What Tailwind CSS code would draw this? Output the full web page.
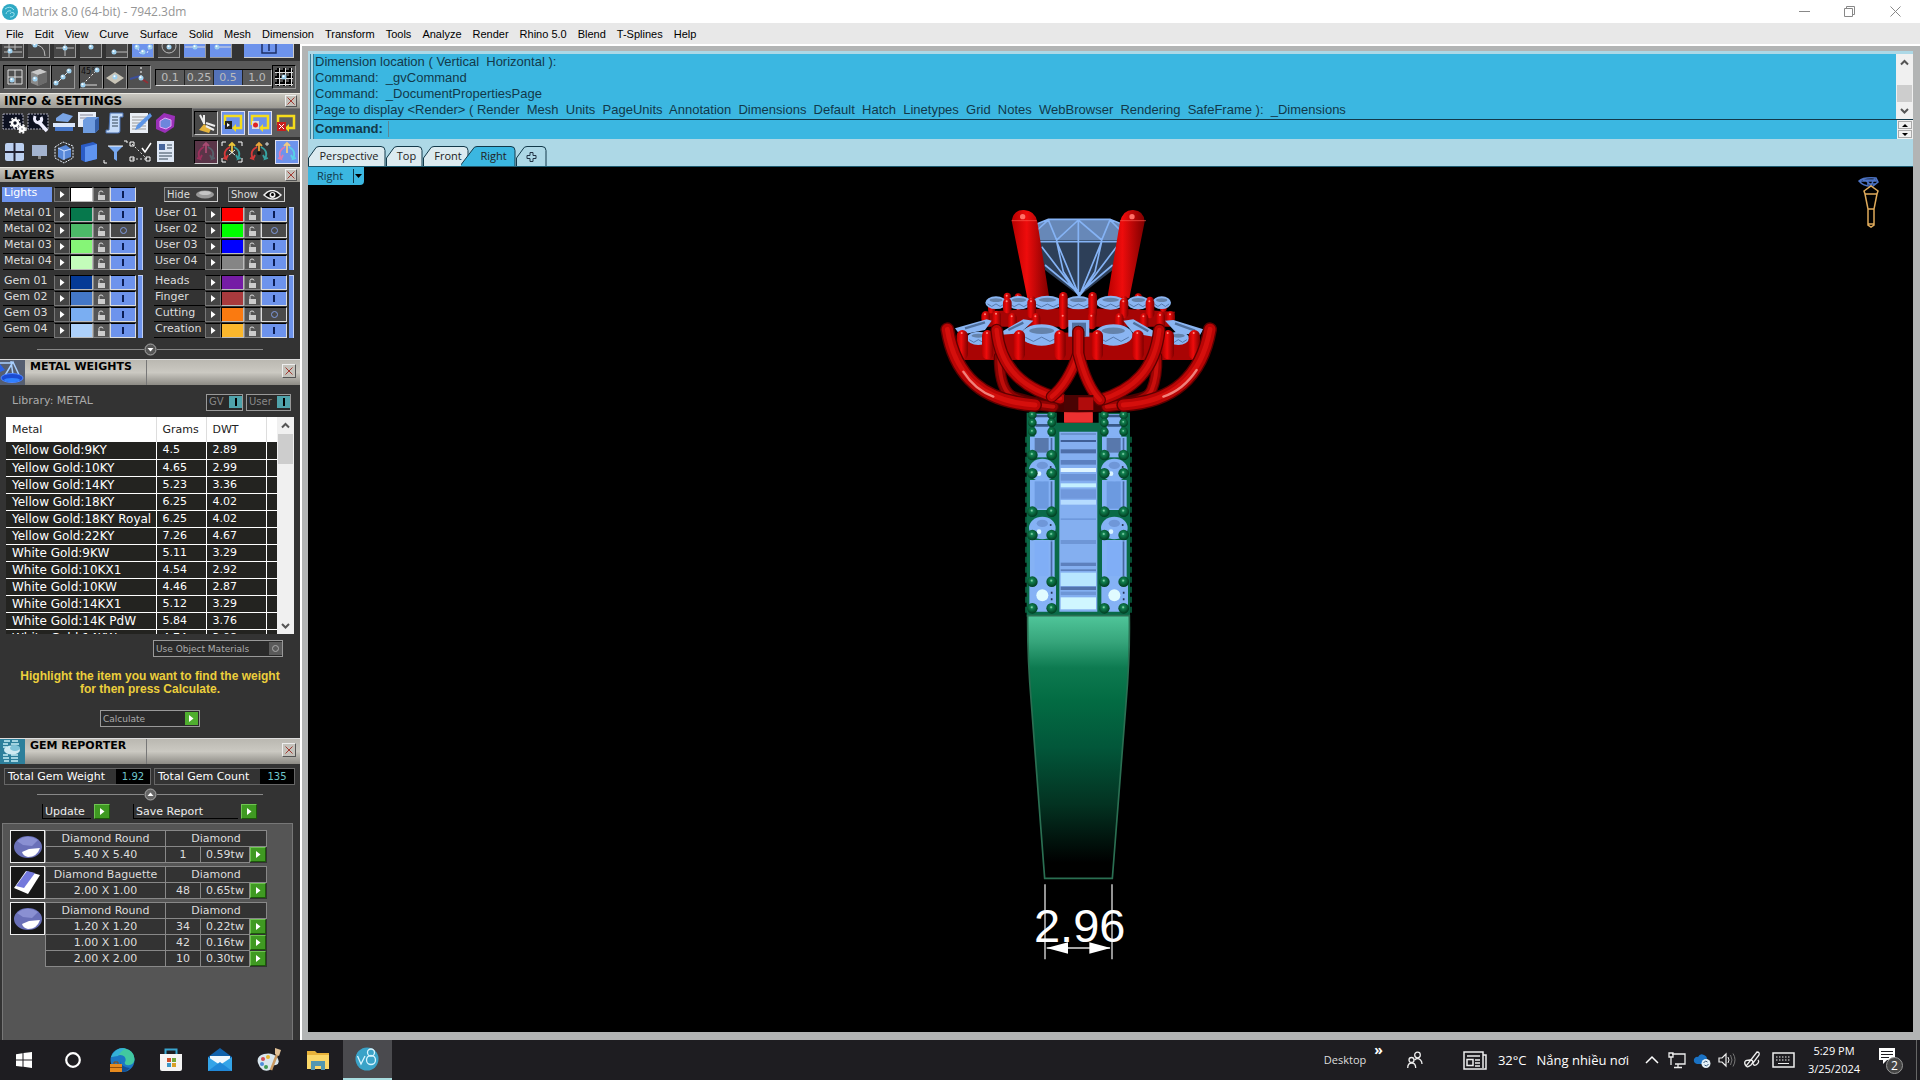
<!DOCTYPE html>
<html lang="en">
<head>
<meta charset="utf-8">
<title>Matrix 8.0 (64-bit) - 7942.3dm</title>
<script src="https://cdn.jsdelivr.net/npm/@tailwindcss/browser@4"></script>
</head>
<body class="h-screen overflow-hidden flex flex-col bg-white font-['Open_Sans',sans-serif] text-black">

<header class="shrink-0">
  <div class="h-[23px] flex items-center bg-white pl-0.5">
    <svg class="size-4 shrink-0" viewBox="0 0 16 16"><circle cx="8" cy="8" r="8" fill="#2fa9c4"/><path d="M3 5q5-4 9 1M4 10q1-4 5-3M8 13q5 0 4-4-3-2-4 1" fill="none" stroke="#9be0ee"/></svg>
    <h1 class="ml-1 text-xs leading-4 text-[#959595]">Matrix 8.0 (64-bit) - 7942.3dm</h1>
    <div class="ml-auto flex text-[#888] pr-px">
      <button aria-label="Minimize" class="w-[45px] h-5 grid place-items-center"><svg width="11" height="11" stroke="currentColor" fill="none"><path d="M0 5.500H11"/></svg></button>
      <button aria-label="Restore" class="w-[45px] h-5 grid place-items-center"><svg width="11" height="11" stroke="currentColor" fill="none"><path d="M.5 2.500h8v8h-8zM2.500 2.500v-2h8v8h-2"/></svg></button>
      <button aria-label="Close" class="w-[47px] h-5 grid place-items-center"><svg width="11" height="11" stroke="currentColor" fill="none"><path d="M.5.5l10 10M10.500.5l-10 10"/></svg></button>
    </div>
  </div>
  <nav class="h-[21px] flex items-center gap-[11px] bg-[#e8e8e8] pl-1.5 font-['Liberation_Sans',sans-serif] text-[11px] leading-4">
    <button>File</button><button>Edit</button><button>View</button><button>Curve</button><button>Surface</button><button>Solid</button><button>Mesh</button><button>Dimension</button><button>Transform</button><button>Tools</button><button>Analyze</button><button>Render</button><button>Rhino 5.0</button><button>Blend</button><button>T-Splines</button><button>Help</button>
  </nav>
</header>

<div class="flex-1 min-h-0 flex">
  <aside class="w-[300px] shrink-0 overflow-hidden flex flex-col bg-[#333] font-['DejaVu_Sans',sans-serif] text-[11px] leading-4 text-[#ddd]">
    <!-- snap toolbars -->
    <div id="snaps" class="h-[17px] shrink-0 flex items-start gap-1 pl-0.5 overflow-hidden"></div>
    <div class="h-8 shrink-0 flex items-center bg-[#5a5a5a] pl-[3px]">
      <div id="modesA" class="flex"></div>
      <div id="modesB" class="flex ml-1"></div>
      <div class="flex ml-1 border border-t-black border-l-black border-r-[#bbb] border-b-[#ddd] text-[#bbb] h-[17px] leading-[15px]">
        <button class="w-[29px] border-r border-[#222]">0.1</button><button class="w-[29px] border-r border-[#222]">0.25</button><button class="w-[29px] border-r border-[#222] bg-[#5472b8]">0.5</button><button class="w-[28px]">1.0</button>
      </div>
      <div id="modesC" class="flex"></div>
    </div>

    <div class="h-[15px] shrink-0 flex items-center justify-between bg-linear-to-b from-[#c9c7c0] to-[#9b9992] border-t border-[#e8e6e0] pl-1 pr-[3px]">
      <h2 class="font-bold text-xs leading-[14px] text-black">INFO &amp; SETTINGS</h2><button class="xbtn" aria-label="Close info"></button>
    </div>
    <div class="h-[59px] shrink-0 flex justify-between">
      <div id="info" class="grid grid-cols-7 w-[178px] h-[58px] pl-0.5 place-items-center"></div>
      <div class="w-[108px] flex flex-col">
        <div id="histA" class="h-[29px] grid grid-cols-4 place-items-center bg-[#5c5c5c] border-t border-l border-[#777]"></div>
        <div id="histB" class="h-[29px] grid grid-cols-4 place-items-center"></div>
      </div>
    </div>

    <div class="h-[15px] shrink-0 flex items-center justify-between bg-linear-to-b from-[#c9c7c0] to-[#9b9992] border-t border-[#e8e6e0] pl-1 pr-[3px]">
      <h2 class="font-bold text-xs leading-[14px] text-black">LAYERS</h2><button class="xbtn" aria-label="Close layers"></button>
    </div>
    <div class="h-[177px] shrink-0 pt-[5px] flex flex-col">
      <div class="flex h-4 pl-0.5">
        <div id="lights"></div>
        <button class="ml-7 w-[54px] h-[15px] flex items-center justify-between border border-t-[#888] border-l-[#888] border-r-[#ccc] border-b-[#ccc] px-0.5 text-[10px] leading-3 bg-[#3d3d3d]">Hide<svg width="19" height="9"><ellipse cx="9" cy="4.500" rx="9" ry="4" fill="#999"/><ellipse cx="9" cy="3" rx="6" ry="2" fill="#c5c5c5"/></svg></button>
        <button class="ml-2.5 w-[57px] h-[15px] flex items-center justify-between border border-t-[#888] border-l-[#888] border-r-[#ccc] border-b-[#ccc] px-0.5 text-[10px] leading-3 bg-[#3d3d3d]">Show<svg width="19" height="10"><path d="M1 5q8-9 17 0-8 8-17 0z" fill="#111" stroke="#eee" stroke-width="1.500"/><circle cx="9.500" cy="5" r="3" fill="#eee"/><circle cx="9.500" cy="4.500" r="1.500"/></svg></button>
      </div>
      <div id="layers" class="grid grid-cols-[151px_1fr] gap-y-1 mt-1 pl-[3px]"></div>
      <div class="flex items-center mt-1 px-[37px]"><span class="h-px flex-1 bg-[#888]"></span><button aria-label="Show more layers"><svg width="13" height="13"><circle cx="6.500" cy="6.500" r="5.500" fill="#555" stroke="#aaa"/><path d="M3.500 5h6l-3 3.500z" fill="#fff"/></svg></button><span class="h-px flex-1 bg-[#888]"></span></div>
    </div>

    <div class="h-[26px] shrink-0 flex items-stretch bg-linear-to-b from-[#bab8b1] via-[#cbc9c2] to-[#8d8b85] border-t border-[#ddd]">
      <svg class="w-[25px] h-[25px] bg-[#555e70]" viewBox="0 0 25 25"><path d="M0 3l14 0M11 1l2 14M13 2L4 17h16z" fill="none" stroke="#a9d0ff" stroke-width="1.500"/><ellipse cx="12" cy="18" rx="11" ry="4.500" fill="#1b4bd2" stroke="#4f86ff"/><ellipse cx="12" cy="20" rx="8" ry="2" fill="#2f80ff"/><path d="M0 4l5 6-5 2z" fill="#2c63e6"/></svg>
      <h2 class="w-[122px] pl-[5px] font-bold text-black border-r border-[#777] leading-[13px]">METAL WEIGHTS</h2>
      <div class="flex-1 flex items-center justify-end pr-1 pb-1"><button class="xbtn" aria-label="Close metal weights"></button></div>
    </div>
    <div class="h-8 shrink-0 flex items-center pl-3 pr-[9px] text-[10px] text-[#aaa]">
      <span class="mr-auto text-[11px]">Library: METAL</span>
      <button class="w-[37px] h-[17px] mt-0.5 flex items-center justify-between border border-[#999] bg-[#2a2a2a] pl-0.5 text-[#888] leading-3">GV<i class="w-[13px] h-3 grid place-items-center bg-[#4fa3ab]"><b class="w-0.5 h-2 bg-black"></b></i></button>
      <button class="w-[45px] h-[17px] mt-0.5 ml-[3px] flex items-center justify-between border border-[#999] bg-[#2a2a2a] pl-0.5 text-[#888] leading-3">User<i class="w-[13px] h-3 grid place-items-center bg-[#4fa3ab]"><b class="w-0.5 h-2 bg-black"></b></i></button>
    </div>
    <div class="h-[217px] shrink-0 ml-1.5 mr-1.5 flex overflow-hidden">
      <table class="w-[271px] table-fixed border-collapse text-left text-white self-start">
        <colgroup><col class="w-[150px]"><col class="w-[50px]"><col class="w-[60px]"><col></colgroup>
        <thead class="bg-white text-[#222]"><tr class="h-[25px]"><th class="font-normal pl-1.5 p-0 border-r border-[#ddd]">Metal</th><th class="font-normal pl-1.5 p-0 border-r border-[#ddd]">Grams</th><th class="font-normal pl-1.5 p-0 border-r border-[#ddd]">DWT</th><th class="p-0"></th></tr></thead>
        <tbody id="metals" class="bg-[#232320]"></tbody>
      </table>
      <div class="w-[17px] flex flex-col items-center bg-[#f0f0f0]">
        <svg width="17" height="17" fill="none" stroke="#555" stroke-width="2"><path d="M5 10.500l3.500-3.500 3.500 3.500"/></svg>
        <div class="w-[15px] h-[30px] bg-[#cdcdcd]"></div>
        <svg class="mt-auto" width="17" height="17" fill="none" stroke="#555" stroke-width="2"><path d="M5 7l3.500 3.500 3.500-3.500"/></svg>
      </div>
    </div>
    <button class="shrink-0 mt-1.5 ml-[153px] w-[130px] h-[17px] flex items-center justify-between border border-[#999] bg-[#2a2a2a] pl-0.5 text-[9px] text-[#aaa] leading-3">Use Object Materials<i class="w-[13px] h-[13px] grid place-items-center bg-[#5a5a5a]"><b class="size-[7px] rounded-full border border-[#aaa]"></b></i></button>
    <p class="shrink-0 mt-[13px] text-center font-['Liberation_Sans',sans-serif] font-bold text-xs leading-[13px] text-[#eccf3c]">Highlight the item you want to find the weight<br>for then press Calculate.</p>
    <button class="shrink-0 mt-3.5 ml-[100px] w-[100px] h-[17px] flex items-center justify-between border border-[#999] bg-[#2a2a2a] pl-0.5 pr-px text-[9px] text-[#aaa] leading-3">Calculate<i class="go"></i></button>

    <div class="mt-[11px] h-[26px] shrink-0 flex items-stretch bg-linear-to-b from-[#bab8b1] via-[#cbc9c2] to-[#8d8b85] border-t border-[#ddd]">
      <svg class="w-[25px] h-[25px] bg-[#2d7f9b]" viewBox="0 0 25 25"><path d="M4 2h6m2 0h6M3 5h5m3 0h8M3 8h4M3 16h5m3 0h7M3 19h6m2 0h7M4 22h5m2 0h7" stroke="#c8f0f8" stroke-width="1.500"/><ellipse cx="12" cy="11" rx="8" ry="4.500" fill="#cfeaf2"/><ellipse cx="15" cy="9" rx="5" ry="3" fill="#7fc3d8"/></svg>
      <h2 class="w-[122px] pl-[5px] font-bold text-black border-r border-[#777] leading-[13px]">GEM REPORTER</h2>
      <div class="flex-1 flex items-center justify-end pr-1 pb-1"><button class="xbtn" aria-label="Close gem reporter"></button></div>
    </div>
    <div class="shrink-0 mt-1 flex pl-1 text-white leading-[15px]">
      <div class="w-[147px] flex justify-between border border-[#666]"><span class="pl-[3px]">Total Gem Weight</span><output class="w-[34px] bg-black text-[#6fc6cc] text-center text-[10px]">1.92</output></div>
      <div class="ml-[3px] w-[141px] flex justify-between border border-[#666]"><span class="pl-[3px]">Total Gem Count</span><output class="w-[34px] bg-black text-[#6fc6cc] text-center text-[10px]">135</output></div>
    </div>
    <div class="shrink-0 flex items-center mt-[3px] px-[37px]"><span class="h-px flex-1 bg-[#888]"></span><button aria-label="Collapse report"><svg width="13" height="13"><circle cx="6.500" cy="6.500" r="5.500" fill="#666" stroke="#aaa"/><path d="M3.500 8h6l-3-3.500z" fill="#fff"/></svg></button><span class="h-px flex-1 bg-[#888]"></span></div>
    <div class="shrink-0 flex mt-[3px] pl-[42px] leading-[15px] text-[#eee]">
      <button class="flex items-center"><span class="w-[49px] h-[15px] text-left pl-0.5 border-l border-b border-black">Update</span><i class="go2"></i></button>
      <button class="flex items-center ml-[23px]"><span class="w-[105px] h-[15px] text-left pl-0.5 border-l border-b border-black">Save Report</span><i class="go2"></i></button>
    </div>
    <div id="gems" class="mt-1 flex-1 min-h-0 ml-0.5 mr-[7px] bg-[#555] border border-b-0 border-[#777] pt-1.5 pl-[7px] flex flex-col gap-[3px]"></div>
  </aside>

  <main class="flex-1 min-w-0 flex flex-col bg-[#b2b4b4] border-l-2 border-t-2 border-white border-r-0 pl-1.5 pr-[7px] pt-[5px] pb-2">
    <section class="shrink-0 bg-[#add8e6] pt-[3px]">
      <div class="ml-0.5 border-l-4 border-double border-[#3b7f99] font-['Liberation_Sans',sans-serif] text-[13px] leading-4 text-[#12394a]">
        <div class="flex h-[65px] bg-[#3bb7e1]">
          <pre class="flex-1 pl-px font-['Liberation_Sans',sans-serif]">Dimension location ( Vertical  Horizontal ):
Command:  _gvCommand
Command:  _DocumentPropertiesPage
Page to display &lt;Render&gt; ( Render  Mesh  Units  PageUnits  Annotation  Dimensions  Default  Hatch  Linetypes  Grid  Notes  WebBrowser  Rendering  SafeFrame ):  _Dimensions</pre>
          <div class="w-[17px] flex flex-col items-center bg-[#f0f0f0]">
            <svg width="17" height="17" fill="none" stroke="#555" stroke-width="2"><path d="M5 10.500l3.500-3.500 3.500 3.500"/></svg>
            <div class="mt-3.5 w-[15px] h-[17px] bg-[#cdcdcd]"></div>
            <svg class="mt-auto" width="17" height="17" fill="none" stroke="#555" stroke-width="2"><path d="M5 7l3.500 3.500 3.500-3.500"/></svg>
          </div>
        </div>
        <div class="flex h-5 border-t border-[#12394a] bg-[#3bb7e1]">
          <label for="cmd" class="pl-px font-bold leading-[18px]">Command:</label>
          <input id="cmd" class="flex-1 ml-[5px] border-l border-[#5b8795] outline-none h-4 mt-px">
          <div class="w-4 flex flex-col items-center justify-center gap-px bg-[#f0f0f0]">
            <button aria-label="Up" class="w-3.5 h-2 border border-[#aaa] grid place-items-center"><svg width="6" height="3"><path d="M0 3l3-3 3 3z"/></svg></button>
            <button aria-label="Down" class="w-3.5 h-2 border border-[#aaa] grid place-items-center"><svg width="6" height="3"><path d="M0 0l3 3 3-3z"/></svg></button>
          </div>
        </div>
      </div>
      <div id="tabs" class="flex h-[27px] items-end text-[11px] text-[#222]"></div>
    </section>
    <section class="relative flex-1 min-h-0 overflow-hidden bg-black border-t border-[#1d5a70]">
      <button class="flex items-center h-[18px] w-14 bg-[#3bb7e1] rounded-br text-[11px] leading-4 text-[#12394a] pl-[9px] justify-between"><span>Right</span><svg width="11" height="14"><path d="M.5 0v14" stroke="#12394a"/><path d="M2 5h7L5.500 9z"/></svg></button>
      <svg class="absolute right-7 top-2" width="30" height="56" viewBox="0 0 30 56" fill="none" stroke-width="1.500"><path d="M4 6q4-4 17-3l2 4-5 4q-9 1-14-5zM4 6h19M9 4l7 6 4-7M8 5h13M12 9h9" stroke="#4c73c4" /><path d="M9 16l7-5 7 5-1 3H10zM10 19l3 15v16l3 2 3-2V34l3-15zM13 34h6M13 49h6" stroke="#e0ab5b"/></svg>
      <svg id="ring" class="absolute left-[612px] top-[23px]" width="320" height="790" viewBox="920 190 320 790">
        <defs>
          <linearGradient id="band" x1="0" y1="0" x2="0" y2="1"><stop offset="0" stop-color="#50c69a"/><stop offset=".1" stop-color="#36a57b"/><stop offset=".2" stop-color="#0d7a50"/><stop offset=".32" stop-color="#036c43"/><stop offset=".5" stop-color="#02573a"/><stop offset=".72" stop-color="#033221"/><stop offset=".94" stop-color="#000"/></linearGradient>
          <linearGradient id="red"><stop offset="0" stop-color="#b80000"/><stop offset=".4" stop-color="#ee0c0c"/><stop offset="1" stop-color="#7d0000"/></linearGradient>
          <radialGradient id="ball" cx=".45" cy=".4" r=".6"><stop offset="0" stop-color="#9fe8c0"/><stop offset=".25" stop-color="#118050"/><stop offset="1" stop-color="#003c20"/></radialGradient>
        </defs>
        <g id="shank" transform="translate(1000 400) scale(.33333)"></g>
        <g transform="translate(1000 600) scale(.33333)">
          <path d="M83 47H388Q390 170 378 310L337 835H134L94 310Q82 170 83 47z" fill="url(#band)" stroke="#2a6f52" stroke-width="5"/>
          <path d="M135 853V1078M336 853V1078M140 1044H330" stroke="#ddd" stroke-width="4"/>
          <path d="M140 1044l64-17v34zM332 1044l-64-17v34z" fill="#fff"/>
          <text x="102" y="1027" font-family="Liberation Sans,sans-serif" font-size="141" fill="#fff">2.96</text>
        </g>
        <g id="head" transform="translate(920 190) scale(.33333)"></g>
      </svg>
    </section>
  </main>
</div>

<footer class="h-10 shrink-0 flex items-stretch bg-[#1e1d21] text-white">
  <div id="apps" class="flex"></div>
  <div class="ml-auto flex items-center">
    <button class="text-[11px] leading-4 text-[#ddd]">Desktop</button>
    <button class="ml-2 -mt-5 text-sm leading-4 font-bold">»</button>
    <button aria-label="People" class="ml-6"><svg width="16" height="18" fill="none" stroke="#eee" stroke-width="1.300"><circle cx="10.500" cy="4" r="2.800"/><circle cx="4.500" cy="9" r="2.500"/><path d="M.7 17q0-5 4-5t4 5M7.500 9q3-3 6 0 1.500 1.500 1.500 4"/></svg></button>
    <button class="ml-10 flex items-center gap-2.5 text-[13px] leading-5"><svg width="25" height="19" fill="none" stroke="#eee" stroke-width="1.500"><path d="M1 1h19v3h3v14H1zM20 4v13M4 5h13M4 8.500h6v6H4zM12 9h5M12 12h5M12 15h5"/></svg><span>32°C</span><span>Nắng nhiều nơi</span></button>
    <div id="tray" class="flex items-center ml-2.5"></div>
    <button class="w-[60px] ml-1.5 text-center text-[11px] leading-[18px]">5:29 PM<br>3/25/2024</button>
    <button aria-label="Notifications" class="ml-3.5 mr-3"><svg width="26" height="32"><path d="M1 4h16v12h-8l-4 4v-4h-4z" fill="#fff"/><path d="M3 7.500h12M3 10.500h12M3 13.500h8" stroke="#1e1d21"/><circle cx="16.500" cy="21.500" r="8" fill="#444" stroke="#999"/><text x="13" y="26" font-size="12" fill="#fff">2</text></svg></button>
    <span class="h-full w-1 border-l border-[#666]"></span>
  </div>
</footer>

<script>
const $=id=>document.getElementById(id);
const svg=(w,h,b)=>`<svg width="${w}" height="${h}" viewBox="0 0 ${w} ${h}" fill="none">${b}</svg>`;
document.querySelectorAll('.xbtn').forEach(b=>{const big=b.parentElement.className.includes('flex-1');
  b.className='grid place-items-center border border-[#eee] border-r-[#555] border-b-[#555] bg-[#c4c2bb] '+(big?'size-[14px]':'size-3');
  b.innerHTML=svg(8,8,'<path d="M.5.5l7 7M7.500.5l-7 7" stroke="#a23a32"/>')});
const tri=svg(5,7,'<path d="M0 0l4.500 3.500L0 7z" fill="#fff"/>');
document.querySelectorAll('.go').forEach(b=>{b.className='size-[13px] grid place-items-center bg-[#4fae2f]';b.innerHTML=tri});
const goCls='w-4 h-[15px] grid place-items-center bg-[#3f9a22] border border-[#6fc452] border-r-[#1c5a0a] border-b-[#1c5a0a]';
document.querySelectorAll('.go2').forEach(b=>{b.className=goCls+' ml-[3px]';b.innerHTML=tri});

const dot=(x,y)=>`<circle cx="${x}" cy="${y}" r="2.500" fill="#9ed0ee"/><circle cx="${x-.5}" cy="${y-.7}" r="1" fill="#fff"/>`;
const snaps=[['Near','<path d="M2 3h18M7 0v14M13 0v6M2 8h18" stroke="#bbb"/>'+dot(8,7),0],['Tangent','<path d="M3 0q14 0 14 12" stroke="#bbb"/>'+dot(7,1),0],['Perp','<path d="M2 4h18M11 0v12" stroke="#bbb"/>'+dot(11,4),0],['Point',dot(11,3),0],['End','<path d="M8 8h13" stroke="#bbb"/>'+dot(8,8),0],['Quad','<path d="M4 1l4 8h7l4-8" stroke="#e8f0ff" stroke-dasharray="2 2"/>'+dot(5,3)+dot(11,8)+dot(18,3),1],['Center','<circle cx="11" cy="2" r="7" stroke="#bbb"/>'+dot(11,3),0],['Mid','<path d="M1 3h20" stroke="#ddd"/>'+dot(11,3),1],['Line','<path d="M7 3h14" stroke="#ddd"/>'+dot(7,3),1]];
$('snaps').innerHTML=snaps.map(([n,b,on])=>`<button aria-label="${n}" class="w-[22px] h-3.5 border-r border-b border-[#999] ${on?'bg-[#6d93ec]':'bg-[#484848]'}">${svg(22,13,b)}</button>`).join('')+`<button aria-label="Osnap" class="ml-2 w-[50px] h-3.5 bg-[#6d93ec] border-r border-b border-[#ccc] grid place-items-center">${svg(16,13,'<path d="M1 0v9h14V0M8 0v7" stroke="#1c2f66" stroke-width="1.500"/>')}</button>`;
const mode=(n,b)=>`<button aria-label="${n}" class="size-6 shrink-0 border border-[#999] border-t-black border-l-black bg-[#505050] grid place-items-center">${svg(22,22,b)}</button>`;
$('modesA').innerHTML=mode('Grid','<path d="M4 4h14v14H4zM11 4v14M4 11h14" stroke="#ddd"/>'+dot(8,14))+mode('Box','<path d="M3 6l9-3 7 3v10l-9 4-7-3z" fill="#8a8a8a"/><path d="M3 6l9-3 7 3-9 3z" fill="#c8c8c8"/><path d="M10 9l9-3v10l-9 4z" fill="#6b6b6b"/>'+dot(7,13))+mode('Line','<path d="M4 18L18 4" stroke="#ddd"/>'+dot(11,11)+dot(17,5)+dot(4,17));
$('modesB').innerHTML=mode('Angle','<text x="1" y="8" font-size="8" fill="#111">45°</text><path d="M3 19h14" stroke="#ddd"/><path d="M3 18L16 5" stroke="#fff" stroke-dasharray="2 2"/>'+dot(17,4)+dot(3,19))+mode('Plane','<path d="M2 12l9-6 9 6-9 6z" fill="#c9c5b8"/>'+dot(11,11))+mode('Axis','<path d="M2 13l10-3" stroke="#3c4f9b" stroke-width="2"/><path d="M11 11l9 6" stroke="#912f36" stroke-width="2"/><path d="M13 1v10" stroke="#fff" stroke-dasharray="2 2"/>'+dot(13,12));
$('modesC').innerHTML=mode('Grid snap','<path d="M5 2v18M11 2v18M17 2v18M2 5h18M2 11h18M2 17h18" stroke="#000" stroke-width="2"/><path d="M6.500 2v18M12.500 2v18M18.500 2v18M2 6.500h18M2 12.500h18M2 18.500h18" stroke="#ddd"/>'+dot(11,11));

const gear=(x,y,r)=>`<circle cx="${x}" cy="${y}" r="${r}" stroke="#fff" stroke-width="2.500"/><circle cx="${x}" cy="${y}" r="${r+2}" stroke="#fff" stroke-width="1.500" stroke-dasharray="2 1.800"/>`;
const film='<rect x="1" y="3" width="20" height="15" fill="#0c1020" stroke="#aab" stroke-dasharray="2 1"/>';
const info=[
['Options',film+gear(13,12,3)+gear(20,18,2)],
['Preferences',film+'<path d="M11 10l9 10" stroke="#eef" stroke-width="3.500"/><path d="M8 5q-2 6 4 7 4-2 2-6" stroke="#eef" stroke-width="3"/>'],
['Scan','<path d="M4 7l7-5 10 3-5 6-12-1z" fill="#79a4e4"/><path d="M1 12h22v4H1z" fill="#dbe7fa"/><path d="M3 16h18v4H3z" fill="#4676c8"/>'],
['Object','<path d="M1 1h18v15H1z" fill="#e8eef8"/><path d="M3 4h13M3 7h13" stroke="#889"/><path d="M6 9l4-3h12v12l-4 4H6z" fill="#6e9ce0"/><path d="M18 9l4-3v12l-4 4z" fill="#345fa8"/>'],
['Script','<path d="M7 2h13v4h-3v14q0 2-2 2H3v-3h3z" fill="#c7dcf8" stroke="#4a70b0"/><path d="M9 6h6M9 9h6M9 12h6M9 15h6" stroke="#345"/>'],
['Notes','<path d="M2 2h18v20H2z" fill="#e9eef5"/><path d="M4 6h14M4 9h14M4 12h14M4 15h14M4 18h14" stroke="#999"/><path d="M22 2L9 14l-2 5 5-2L24 5z" fill="#5d95e6"/>'],
['Package','<path d="M3 9l8-7 11 3-1 11-9 6-9-4z" fill="#9a30b8"/><path d="M7 10l5-3 6 2v6l-5 3-6-2z" fill="#6d86dc" stroke="#e7a4f7"/>'],
['Viewports','<rect x="3" y="3" width="19" height="18" rx="2" fill="#bcd0f0"/><path d="M12.500 3v18M3 12h19" stroke="#223" stroke-width="2"/>'],
['Display','<rect x="5" y="5" width="15" height="11" fill="#a3b3cf"/><path d="M11 16h3v3h-3z" fill="#888"/>'],
['Cage','<path d="M3 7l8-5 10 4v12l-9 5-9-5z" stroke="#e5edf8" stroke-dasharray="2 1"/><path d="M6 8l8-3 5 4v8l-8 3-5-3z" fill="#5888d8"/><path d="M6 8l6 3 7-2M12 11v9" stroke="#cfe0ff"/>'],
['Book','<path d="M4 5l12-3 4 2v15l-12 3-4-2z" fill="#2b5cc6"/><path d="M8 7l12-3v15l-12 3z" fill="#5f94f0"/>'],
['Filter','<path d="M5 6h15l-6 6v9l-3-2v-7z" fill="#78a9f0"/><path d="M5 6h15" stroke="#fff"/><path d="M24 3V1h-3M1 20v3h3" stroke="#fff"/>'],
['Check','<path d="M4 4l15 15M4 19h16" stroke="#ddd" stroke-dasharray="2 2"/><path d="M2 2h4v4H2zM2 17h4v4H2zM18 17h4v4h-4z" stroke="#fff"/><path d="M14 8l3 4 6-9" stroke="#fff" stroke-width="1.500"/>'],
['Report','<path d="M4 1h17v21H4z" fill="#dfe8f5"/><path d="M6 4h6v6H6z" fill="#47669e"/><path d="M14 5h5M14 8h5M6 13h13M6 16h13M6 19h9" stroke="#345"/>']];
$('info').innerHTML=info.map(([n,b])=>`<button aria-label="${n}">${svg(25,24,b)}</button>`).join('');
const hb=(n,b,c)=>`<button aria-label="${n}" class="size-6 ${c}">${svg(22,22,b)}</button>`;
const loop=x=>`<path d="M3 13V4h16v12h-6" stroke="#f5dc1c" stroke-width="2.500"/><path d="M14 12l-4 4 4 4z" fill="#f5dc1c"/>${x}`;
const blue='bg-[#6d93ec] border border-[#dde] ';
$('histA').innerHTML=hb('Build','<path d="M4 18l5-6 7 5-2 4z" fill="#e4b33c"/><path d="M5 3l4 8M9 3v9M20 14l-9-3M19 18l-8-4" stroke="#eee" stroke-width="2"/>','border border-[#ccc] border-t-black border-l-black bg-[#484848]')+hb('Play',loop('<path d="M3 9h7v8H3z" fill="#222"/><path d="M5 11l3 2-3 2z" fill="#fff"/>'),blue)+hb('Record',loop('<path d="M3 9h7v8H3z" fill="#ddd"/><circle cx="6.500" cy="13" r="2.500" fill="#d22"/>'),blue)+hb('Stop',loop('<path d="M2 10h9v9H2z" fill="#c81e1e"/><path d="M4 12l5 5M9 12l-5 5" stroke="#fff"/>'),'');
const giz=(a,b,c,x)=>`<path d="M11 12V2M8 5l3-3 3 3" stroke="${a}" stroke-width="1.800"/><path d="M9 6Q1 10 5 18l-3-1M5 18l2-4" stroke="${b}" stroke-width="1.800"/><path d="M13 6q8 4 4 12l3-1M17 18l-2-4" stroke="${c}" stroke-width="1.800"/>${x}`;
$('histB').innerHTML=hb('Gizmo off',giz('#a84a72','#9c2f5c','#56606a',''),'border border-[#ccc] border-t-black border-l-black bg-[#5a3548]')+hb('Gizmo view',giz('#e9c53a','#d63a3a','#37a0a0','<path d="M8 9l6 5M14 9l-6 5" stroke="#eee"/><path d="M1 5V1h4M17 1h4v4M21 17v4h-4M5 21H1v-4" stroke="#fff"/>'),'')+hb('Gizmo object',giz('#e9a53a','#d63a3a','#37a0a0','<circle cx="11" cy="12" r="2" fill="#111"/><path d="M19 1v4M17 3h4" stroke="#ddd"/>'),'')+hb('Gizmo',giz('#f1cb80','#e07ab0','#58d0e8',''),blue);

const lock=svg(9,10,'<path d="M2 5V2.500Q2 1 4 1t2 1.500" stroke="#ddd"/><path d="M1 5h7v5H1z" fill="#ccc"/>');
const row=([n,c,on],w)=>`<div class="flex h-4"><span class="${w} h-[15px] leading-[11px] whitespace-nowrap ${n=='Lights'?'bg-[#6d93ec] pl-0.5 text-white mr-0.5':'border-b border-black pl-px'}">${n}</span>
<button aria-label="${n} menu" class="w-4 h-[15px] grid place-items-center bg-[#444] border border-[#777] border-t-black">${tri}</button>
<button aria-label="${n} color" class="w-[23px] h-[15px] border border-[#bbb] border-t-black border-l-black" style="background:${c}"></button>
<button aria-label="${n} lock" class="w-[17px] h-[15px] grid place-items-center bg-[#555] border border-[#888] border-t-black">${lock}</button>
<button aria-label="${n} visible" class="w-[26px] h-[15px] grid place-items-center border border-[#ddd] border-t-black ${on?'bg-[#6d93ec]':'bg-[#4a4a4a]'}">${on?'<b class="w-0.5 h-[7px] bg-[#0b1d55]"></b>':'<b class="size-[7px] rounded-full border border-[#7f9be0]"></b>'}</button></div>`;
$('lights').innerHTML=row(['Lights','#fff',1],'w-[50px]');
const groups=[[['Metal 01','#06784c',1],['Metal 02','#4cba68',0],['Metal 03','#86f577',1],['Metal 04','#c3fcba',1]],[['User 01','#f00',1],['User 02','#0f0',0],['User 03','#00f',1],['User 04','#858585',1]],[['Gem 01','#053a96',1],['Gem 02','#4377c7',1],['Gem 03','#7aaef2',1],['Gem 04','#acd0fa',1]],[['Heads','#751ca5',1],['Finger','#a83a3d',1],['Cutting','#fa7a10',0],['Creation','#fbb72c',1]]];
$('layers').innerHTML=groups.map(g=>`<div class="flex"><div>${g.map(r=>row(r,'w-[51px]')).join('')}</div><i class="ml-0.5 w-[5px] h-[63px] bg-[#6d93ec] border-t border-r border-[#c0d0f5]"></i></div>`).join('');

const metals=['Yellow Gold:9KY|4.5|2.89','Yellow Gold:10KY|4.65|2.99','Yellow Gold:14KY|5.23|3.36','Yellow Gold:18KY|6.25|4.02','Yellow Gold:18KY Royal|6.25|4.02','Yellow Gold:22KY|7.26|4.67','White Gold:9KW|5.11|3.29','White Gold:10KX1|4.54|2.92','White Gold:10KW|4.46|2.87','White Gold:14KX1|5.12|3.29','White Gold:14K PdW|5.84|3.76','White Gold:14KW|4.74|3.08'];
$('metals').innerHTML=metals.map(m=>`<tr class="h-[17px] border-b border-white">${m.split('|').map((t,i)=>`<td class="p-0 pl-1.5 leading-4 whitespace-nowrap border-r border-white ${i?'':'text-xs leading-4'}">${t}</td>`).join('')}<td class="p-0"></td></tr>`).join('');

const gemIcon={r:'<ellipse cx="17" cy="16" rx="14" ry="11" fill="#6a70b8"/><path d="M6 10q10-8 21-1l-6 6-9-1z" fill="#8a90d2"/><path d="M11 21l7-3 11-1q-3 9-12 9-5-1-6-5z" fill="#fff"/>',b:'<path d="M15 4l14 4-12 19-14-6z" fill="#fff"/><path d="M16 4l8 2-11 15-8-2z" fill="#7378dc"/>'};
const gems=[['r','Diamond Round',['5.40 X 5.40|1|0.59tw']],['b','Diamond Baguette',['2.00 X 1.00|48|0.65tw']],['r','Diamond Round',['1.20 X 1.20|34|0.22tw','1.00 X 1.00|42|0.16tw','2.00 X 2.00|10|0.30tw']]];
$('gems').innerHTML=gems.map(([k,n,rs])=>`<div class="flex items-start"><span class="w-[35px] h-[33px] bg-[#181818] border border-[#eee]">${svg(33,31,gemIcon[k])}</span>
<table class="w-[222px] table-fixed border-collapse bg-[#333] text-center leading-[15px]"><colgroup><col class="w-[120px]"><col class="w-[35px]"><col class="w-[49px]"><col></colgroup><tbody><tr class="h-4"><td class="p-0 border border-[#888]">${n}</td><td colspan="3" class="p-0 border border-[#888]">Diamond</td></tr>${rs.map(r=>`<tr class="h-4">${r.split('|').map(t=>`<td class="p-0 border border-[#888]">${t}</td>`).join('')}<td class="p-0"><button aria-label="Details" class="${goCls} block">${tri}</button></td></tr>`).join('')}</tbody></table></div>`).join('');

const tabs=[['Perspective','w-[78px]',78,'#dcebf0','pl-1'],['Top','w-[37px]',37,'#dcebf0','pl-1'],['Front','w-[46px]',46,'#dcebf0','pl-1'],['Right','w-[55px]',55,'#3bb7e1','-ml-2 pl-2.5'],['','w-[31px]',31,'#add8e6','pl-2.5']];
$('tabs').innerHTML=tabs.map(([n,w,x,f,m])=>`<button aria-label="${n||'New tab'}" class="relative ${w} ${m} h-5 text-center leading-5"><svg class="absolute inset-0" width="${x}" height="20" fill="${f}" stroke="#12394a"><path d="M${n=='Right'?-1:.5} 20${n=='Right'?'L12 3':'V12L7 3'}q1-2.500 4-2.500H${x-5}q4 0 4 4V20"/></svg><span class="relative">${n||svg(11,20,'<path d="M4 6.500h3v3h3v3H7v3H4v-3H1v-3h3z" stroke="#234"/>')}</span></button>`).join('');

// ring head: stones, prongs and basket
const tube=(d,w,c='#b80505')=>`<path d="${d}" fill="none" stroke="#5e0000" stroke-width="${w}" stroke-linecap="round"/><path d="${d}" fill="none" stroke="${c}" stroke-width="${w*.8}" stroke-linecap="round"/><path d="${d}" fill="none" stroke="#f21a14" stroke-opacity=".5" stroke-width="${w*.35}" stroke-linecap="round"/>`;
const post=(x,y,h,w=34)=>`<rect x="${x-w/2}" y="${y}" width="${w}" height="${h}" rx="${w/2}" fill="url(#red)"/><circle cx="${x-2}" cy="${y+9}" r="3" fill="#ff8a80"/>`;
const stone=(x,y,rx,ry)=>`<ellipse cx="${x}" cy="${y}" rx="${rx}" ry="${ry}" fill="#8ab5f2"/><ellipse cx="${x}" cy="${y-ry*.4}" rx="${rx*.6}" ry="${ry*.3}" fill="#6482aa"/><path d="M${x-rx*.8} ${y+ry*.2}l${rx*.4} ${ry*.4} ${rx*.4}-${ry*.4} ${rx*.4} ${ry*.4} ${rx*.4}-${ry*.4}" fill="none" stroke="#4b6c9c" stroke-width="2.500"/>`;
let h=`<path d="M385 88H570L605 102V150L578 240 478 318 375 240 348 150V102z" fill="#2d3f58"/><path d="M385 88H570L605 102V150H350V102z" fill="#6788b8"/><path d="M385 88H570L605 102V155H350V102zM352 120L385 90 410 150 475 90 545 150 570 90 600 120M350 155H600M475 90V318M410 155L478 318 545 155M365 170L478 318 590 170M375 225L478 310 578 225M410 155L430 245 478 318 525 245 545 155" fill="none" stroke="#85b3f5" stroke-width="5"/>
<path d="M275 92Q282 58 312 60 345 62 352 95L388 325H322z" fill="url(#red)"/><path d="M600 95Q610 58 640 60 672 62 674 95L628 325H562z" fill="url(#red)"/><path d="M275 92H350M600 92H678" stroke="#ff5b50" stroke-width="2"/><circle cx="308" cy="80" r="8" fill="#ff7068"/><circle cx="636" cy="80" r="8" fill="#ff7068"/>`;
h+=`<path d="M190 365Q475 345 765 365L750 410H200z" fill="#a50505"/>`;
[[215,325,45],[262,308,50],[295,310,50],[335,318,60],[612,318,60],[655,310,50],[690,320,60],[730,320,45]].forEach(a=>h+=post(a[0],a[1],a[2],22));
[[228,338,32,19],[297,338,36,20],[382,338,44,21],[475,338,42,20],[572,338,42,21],[655,338,34,20],[725,338,28,19]].forEach(a=>h+=stone(...a));
[[262,325,45],[335,325,60],[430,306,80],[518,306,80],[612,325,60],[690,325,60],[197,364,35],[230,362,60],[277,370,50],[348,370,50],[430,368,50],[516,368,50],[598,370,50],[672,370,50],[722,366,50],[752,364,35]].forEach(a=>h+=post(a[0],a[1],a[2],26));
h+=`<path d="M115 440Q475 415 840 440L825 510H130z" fill="#a90404"/><path d="M105 415L200 388 215 392 195 420 120 435zM245 425L310 388 340 392 300 430 235 435zM610 392L640 388 705 425 700 440 640 430zM735 392L760 390 850 418 840 435 770 430z" fill="#8ab5f2"/><path d="M135 415l60-18M265 420l45-22M640 398l45 26M765 400l60 22" stroke="#4f6f9c" stroke-width="7"/><path d="M445 390H508V440H445z" fill="#8ab5f2"/><path d="M456 398H498V440H456z" fill="#51709e"/>`;
[[175,445,34,20],[365,435,62,32],[580,435,58,32],[775,445,32,20]].forEach(a=>h+=stone(...a));
[[127,420,88],[203,420,88],[298,420,90],[420,420,90],[532,420,90],[654,420,90],[745,420,88],[823,420,88]].forEach(a=>h+=post(...a));
h+='<path d="M245 590Q475 680 710 590L620 655Q475 680 330 655z" fill="#4a0000"/>'+tube('M238 500Q238 580 265 610T400 650',34,'#8c0303')+tube('M710 500Q712 560 695 600T560 650',34,'#a00404')+tube('M82 418C105 560 190 635 345 645',42)+tube('M870 418C845 560 760 635 610 645',42)+tube('M230 420C240 540 320 600 420 625',38)+tube('M718 420C705 540 640 600 540 630',38)+tube('M475 425V490Q445 580 395 620',36)+tube('M475 425V490Q500 590 540 630',36);
h+='<path d="M130 545Q165 600 220 620M830 540Q790 600 730 620" fill="none" stroke="#ffc0b8" stroke-width="7" stroke-linecap="round" opacity=".65"/><path d="M432 615H520V660H432z" fill="#4a0303"/><path d="M475 622H520V660H475z" fill="#b00c0c"/><path d="M435 668H518V697H435z" fill="#ec3030"/>';
$('head').innerHTML=h;

// shank: channel baguettes between two pavé rails
let s='<path d="M80 38H170V68H296V38H390V650H80z" fill="#0a6a48"/><path d="M178 95H292V635H178z" fill="#84aff0"/><path d="M192 35H278V68H192z" fill="#e83030"/>';
[[100,4,'#6085c2'],[120,6,'#3f5f96'],[148,12,'#4d6ea8'],[180,14,'#5c80c0'],[204,12,'#dff4ff'],[222,20,'#6c93d6'],[250,12,'#c4f0ff'],[268,28,'#7098dc'],[300,14,'#b6dcff'],[355,5,'#6e98dc'],[420,12,'#6e96d6'],[488,10,'#5d80bd'],[508,5,'#5d80bd'],[518,40,'#b8e6ff'],[560,10,'#5273ad'],[575,10,'#6e96d6'],[592,36,'#d0f6ff']].forEach(([y,k,c])=>s+=`<rect x="182" y="${y}" width="106" height="${k}" fill="${c}"/>`);
[0,216].forEach(o=>{const g=(y,k,c)=>{s+=`<rect x="${90+o}" y="${y}" width="74" height="${k}" fill="#85b2f5"/><rect x="${104+o}" y="${y+4}" width="42" height="${k-8}" fill="${c}"/><rect x="${152+o}" y="${y+4}" width="5" height="${k-8}" fill="#46689e"/>`};
s+=`<rect x="${104+o}" y="42" width="44" height="130" fill="#85b2f5"/><path d="M${106+o} 48h40M${106+o} 76h40" stroke="#385888" stroke-width="8"/>`;
g(110,52,'#5878ac');g(240,90,'#6c9ae0');g(420,112,'#80aef6');
[[196,40],[370,40]].forEach(([y,r])=>s+=`<ellipse cx="${127+o}" cy="${y+14}" rx="${r}" ry="34" fill="#85b2f5"/><ellipse cx="${127+o}" cy="${y}" rx="17" ry="11" fill="#6f97d8"/><circle cx="${117+o}" cy="${y+25}" r="7" fill="#d8f4ff"/><circle cx="${152+o}" cy="${y+5}" r="3" fill="#234"/>`);
s+=`<rect x="${88+o}" y="530" width="80" height="105" rx="20" fill="#85b2f5"/><circle cx="${127+o}" cy="586" r="18" fill="#e0fbff"/><path d="M${155+o} 575v6m0 14v6" stroke="#235" stroke-width="5"/>`;
[45,68,95,165,220,335,405,545,625].forEach((y,i)=>[97,155].forEach(x=>s+=`<circle cx="${x+o}" cy="${y}" r="${i<3?13:16}" fill="url(#ball)"/>`))});
s+='<path d="M78 110V640M393 110V640" stroke="#0d7a50" stroke-width="4" stroke-dasharray="18 12"/>';
$('shank').innerHTML=s;

const apps=[
['Start','<path d="M4 6.200l6.500-.9v6.300H4zM11.500 5.100L20 4v7.600h-8.500zM4 12.500h6.500v6.300L4 18zM11.500 12.500H20V20l-8.500-1.200z" fill="#fff"/>'],
['Cortana','<circle cx="12" cy="12" r="6.800" stroke="#fff" stroke-width="2.200"/>'],
['Edge','<circle cx="12.500" cy="12" r="12" fill="#1b76c4"/><path d="M1 9Q6-1 15 .5 25 3 24.500 12q-1 6-8 5-3-1-1-4 1-5-5-6-5 0-9.500 2z" fill="#42c8a0"/><path d="M1 9Q6-1 15 .5 10 4 8 8z" fill="#34b0d8"/><path d="M10 13q1 6 10 7-4 4-8 4z" fill="#144f94"/><path d="M0 16h12v8H0z" fill="#e68a1e"/><path d="M4 16v-2h4v2M0 19.500h12" stroke="#8f4b08"/>'],
['Store','<path d="M1 6h22v15q0 2-2 2H3q-2 0-2-2z" fill="#f4f4f4"/><path d="M6.500 6V1.500h11V6" stroke="#39a5cf" stroke-width="2"/><path d="M8 10h4v4H8z" fill="#d0512c"/><path d="M13 10h4v4h-4z" fill="#72a83c"/><path d="M8 15h4v4H8z" fill="#3a98c8"/><path d="M13 15h4v4h-4z" fill="#d8a128"/>'],
['Mail','<path d="M0 9L12 0l12 9v14H0z" fill="#1262ab"/><path d="M2 8h20v8H2z" fill="#f1f8fd"/><path d="M0 9l12 8 12-8v14H0z" fill="#34a4e8"/><path d="M0 23l12-9 12 9z" fill="#2088d8"/>'],
['Paint','<path d="M1 15Q-1 8 7 6t13 3q4 6-1 8-4 0-5 4-3 3-8 1-4-3-5-7z" fill="#d8e6ee"/><circle cx="6" cy="11" r="2" fill="#cf4d54"/><circle cx="11" cy="9" r="2" fill="#e6b832"/><circle cx="5" cy="16" r="2" fill="#4c8edb"/><circle cx="9" cy="19" r="2" fill="#3f9c55"/><path d="M21 4L14 22" stroke="#c99a62" stroke-width="2.500"/><path d="M18 0l6 2-2 6-4-2z" fill="#e0c096"/>'],
['Explorer','<path d="M1 3h8l2 2h12v16H1z" fill="#e8b23a"/><path d="M1 7h22v14H1z" fill="#fbd768"/><path d="M5 13h14v9h-4v-4H9v4H5z" fill="#5297b0"/>'],
['Matrix','<circle cx="12" cy="12" r="11.500" fill="#3aa3c8"/><path d="M2.500 9l3.500 8 4-8" stroke="#d8f5ff" stroke-width="1.300"/><circle cx="16" cy="5.500" r="3.500" stroke="#d8f5ff" stroke-width="1.300"/><circle cx="16" cy="13" r="4.500" stroke="#d8f5ff" stroke-width="1.300"/>']];
$('apps').innerHTML=apps.map(([n,b])=>`<button aria-label="${n}" class="w-[49px] grid place-items-center ${n=='Matrix'?'bg-[#4a4a4e] border-b-2 border-[#a8dde0]':''}">${svg(25,24,b)}</button>`).join('');
const tray=[['Hidden icons','<path d="M3 12l6-6 6 6" stroke="#fff" stroke-width="1.500"/>'],['Network','<path d="M4 3h13v10H7M10 13v3M6 16.500h8M1 2h4v4H1zM3 6v8" stroke="#eee" stroke-width="1.300"/>'],['OneDrive','<path d="M4 13q-4-1-3-5 2-3 4-2 2-4 6-2 3 1 3 4v5z" fill="#1a72c4"/><circle cx="13" cy="12.500" r="4.500" fill="#e6f2f8"/><path d="M10.500 12l2-2 2 1M15.500 13l-2 2-2-1" stroke="#357"/>'],['Volume','<path d="M1 7h3l4-4v12l-4-4H1z" stroke="#eee" stroke-width="1.200"/><path d="M10 6q2 3 0 6" stroke="#eee"/><path d="M12.500 4q3 5 0 10M15 2.500q4 6 0 13" stroke="#777"/>'],['Pen','<path d="M3 15Q-1 9 7 9q5 0 1 5-4 3-5 1L14 1q3 0 2 3l-6 8q0 3 3 2 4-3 2-5" stroke="#eee" stroke-width="1.300"/>']];
$('tray').innerHTML=tray.map(([n,b])=>`<button aria-label="${n}" class="w-[25px] h-6 grid place-items-center">${svg(18,18,b)}</button>`).join('')+`<button aria-label="Keyboard" class="w-[30px] h-6 ml-1 grid place-items-center">${svg(23,16,'<path d="M1 1h21v14H1z" stroke="#eee" stroke-width="1.500"/><path d="M4 5h15M4 8h15" stroke="#eee" stroke-dasharray="1.500 1.500"/><path d="M6 11.500h11" stroke="#eee"/>')}</button>`;
</script>
</body>
</html>
